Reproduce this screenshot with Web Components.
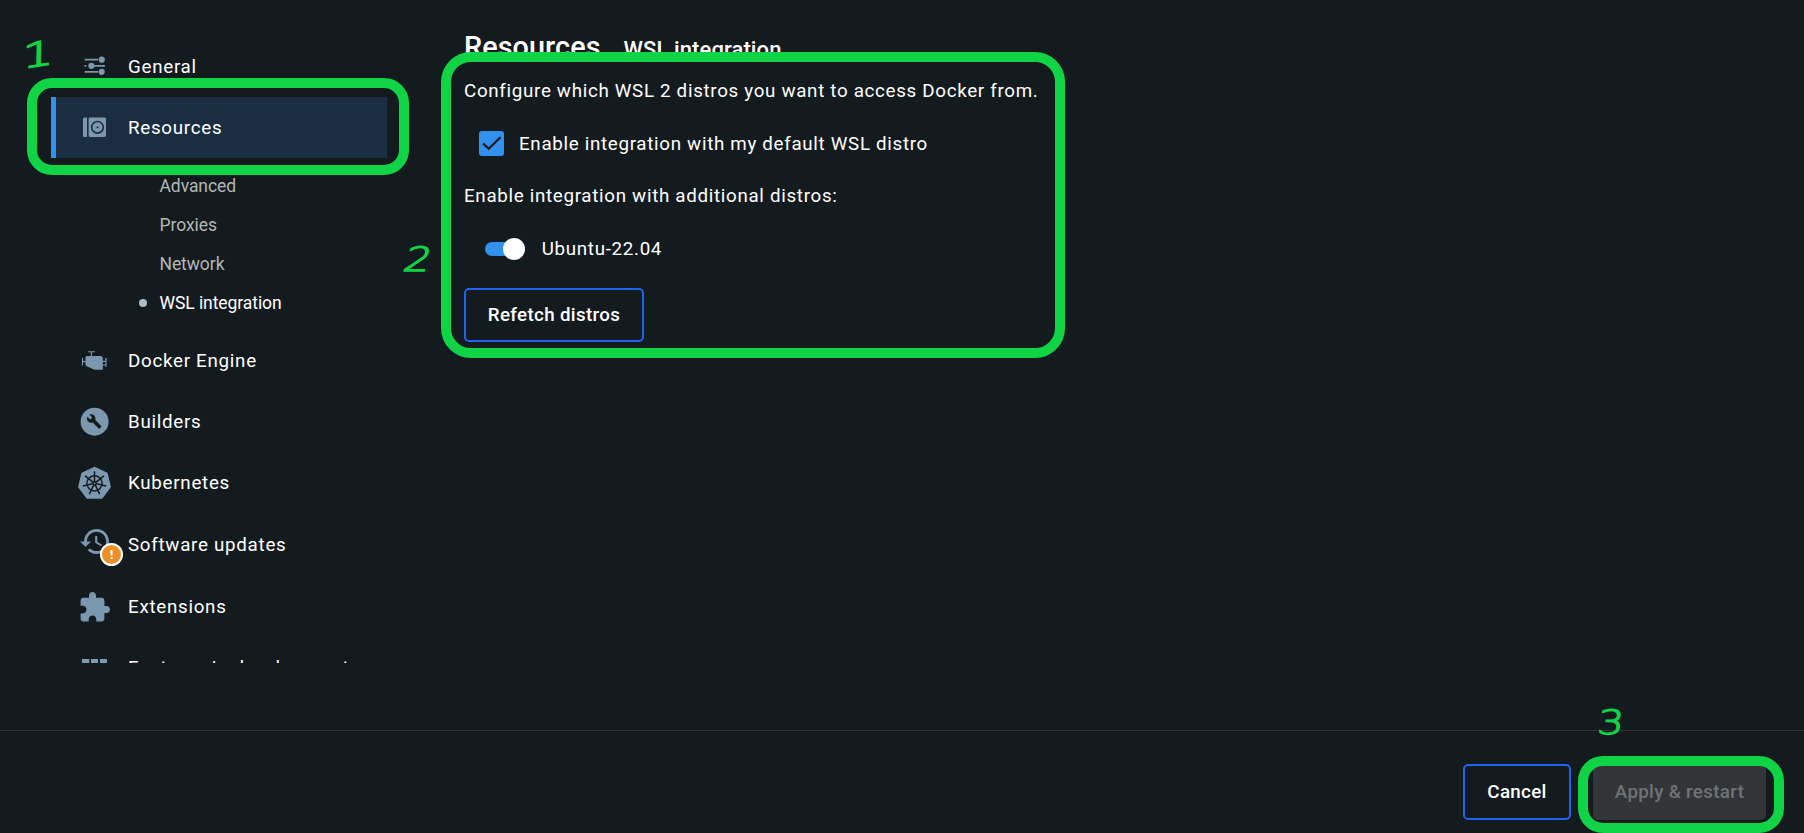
<!DOCTYPE html>
<html lang="en">
<head>
<meta charset="utf-8">
<title>Settings</title>
<style>
html, body { margin: 0; height: 100%; background: #141b1f; }
body { font-family: Roboto, "Liberation Sans", sans-serif; color: #fff; overflow: hidden; }
</style>
</head>
<body>
<settings-window>
  <nav-list slot="nav">
    <nav-item>
      <svg slot="icon" viewBox="75 47 40 40"><path d="M84.7 59.7H98M84.5 65.8H86.3M94 65.8H105M84.7 71.8H98" stroke="currentColor" stroke-width="1.8"/><circle cx="101.7" cy="59.7" r="3.1"/><circle cx="91.4" cy="65.8" r="3.1"/><circle cx="101.7" cy="71.8" r="3.1"/></svg>
      General
    </nav-item>
    <nav-item selected>
      <svg slot="icon" viewBox="75 108 40 40"><path d="M84.5 117.5H87V137H84.5Q83 137 83 135.5V119Q83 117.5 84.5 117.5Z"/><rect x="88.6" y="117.5" width="17.4" height="19.5" rx="1.4"/><circle cx="97.5" cy="127.3" r="5.8" fill="none" stroke="#1b2d40" stroke-width="1.6"/><circle cx="97.5" cy="127.3" r="1" fill="#1b2d40"/></svg>
      Resources
    </nav-item>
    <sub-list>
      <sub-item>Advanced</sub-item>
      <sub-item>Proxies</sub-item>
      <sub-item>Network</sub-item>
      <sub-item selected>WSL integration</sub-item>
    </sub-list>
    <nav-item>
      <svg slot="icon" viewBox="75 341 40 40"><path d="M86.5 356H101.3L102.8 357.5V369.8H94.5L86.7 366.3L85.5 365V357Z"/><path d="M82.5 358V365.6M82.5 361.6H86M88 351.8H95M91.4 352V357M106 359V366.8M105 358.9H107M102 361.4H106M102 365H106" stroke="currentColor" stroke-width="1.1"/></svg>
      Docker Engine
    </nav-item>
    <nav-item>
      <svg slot="icon" viewBox="75 402 40 40"><circle cx="94.6" cy="421.7" r="14"/><path fill="#141b1f" transform="translate(86.3 413.6) scale(.655)" d="M22.7 19l-9.1-9.1c.9-2.3.4-5-1.5-6.9-2-2-5-2.4-7.4-1.3L9 6 6 9 1.6 4.7C.4 7.1.9 10.1 2.9 12.1c1.9 1.9 4.6 2.4 6.9 1.5l9.1 9.1c.4.4 1 .4 1.4 0l2.3-2.3c.5-.4.5-1.1.1-1.4z"/></svg>
      Builders
    </nav-item>
    <nav-item>
      <svg slot="icon" viewBox="-19.5 -20.3 40 40"><path d="M0-15L11.8-9.4L14.8 3.6L6.9 14H-6.9L-14.8 3.6L-11.8-9.4Z" stroke="currentColor" stroke-width="3" stroke-linejoin="round"/><g fill="none" stroke="#141b1f" stroke-width="1.5"><circle r="7.6"/><path d="M0 0V-12M0 0L9.4-7.5M0 0L11.7 2.7M0 0L5.2 10.8M0 0L-5.2 10.8M0 0L-11.7 2.7M0 0L-9.4-7.5"/></g><circle r="2.3" fill="#141b1f"/><circle r=".9"/></svg>
      Kubernetes
    </nav-item>
    <nav-item style="--row:63px">
      <svg slot="icon" viewBox="75 525 40 40"><path transform="translate(78.6 524.9) scale(1.38)" d="M13 3c-4.970 0-9 4.030-9 9H1l3.890 3.890.07.14L9 12H6c0-3.870 3.130-7 7-7s7 3.130 7 7-3.130 7-7 7c-1.930 0-3.680-.79-4.940-2.060l-1.420 1.420C8.270 19.990 10.510 21 13 21c4.970 0 9-4.030 9-9s-4.030-9-9-9zm-1 5v5l4.280 2.540.72-1.210-3.500-2.080V8H12z"/></svg>
      <warn-badge slot="icon"></warn-badge>
      Software updates
    </nav-item>
    <nav-item style="--row:62px">
      <svg slot="icon" viewBox="75 587 40 40"><path transform="translate(77.8 590.7) scale(1.4)" d="M20.5 11H19V7c0-1.100-.9-2-2-2h-4V3.500C13 2.120 11.880 1 10.500 1S8 2.120 8 3.500V5H4c-1.100 0-1.990.9-1.990 2v3.800H3.500c1.490 0 2.700 1.210 2.700 2.700s-1.210 2.700-2.700 2.700H2V20c0 1.100.9 2 2 2h3.800v-1.500c0-1.490 1.210-2.700 2.700-2.700s2.700 1.210 2.700 2.700V22H17c1.100 0 2-.9 2-2v-4h1.500c1.380 0 2.500-1.120 2.500-2.500S21.880 11 20.500 11z"/></svg>
      Extensions
    </nav-item>
    <nav-item style="--row:60px">
      <svg slot="icon" viewBox="75 648 40 40"><path d="M82 659h7.300v7.500H82zM91 659h7v7.500H91zM100 659h7v7.500H100zM82 668.500h7.300v7.500H82zM91 668.500h7v7.500H91zM100 668.500h7v7.500H100z"/></svg>
      Features in development
    </nav-item>
  </nav-list>
  <wsl-panel slot="main"></wsl-panel>
  <action-button slot="actions" style="width:108px;height:56px">Cancel</action-button>
  <action-button slot="actions" disabled style="width:173px;height:56px">Apply &amp; restart</action-button>
  <mark-box slot="marks" style="left:27px;top:78px;width:382px;height:97px;--r:25px"></mark-box>
  <mark-box slot="marks" style="left:441px;top:52px;width:624px;height:306px;--r:30px"></mark-box>
  <mark-box slot="marks" style="left:1578px;top:756px;width:206px;height:77px;--r:25px"></mark-box>
  <mark-number slot="marks" style="left:18px;top:35px;--t:rotate(-9deg) skewX(-10deg) scaleX(1.5)">1</mark-number>
  <mark-number slot="marks" style="left:398px;top:240px;--t:skewX(-16deg) scaleX(1.25)">2</mark-number>
  <mark-number slot="marks" style="left:1591px;top:703px;--t:skewX(-6deg) scaleX(1.22)">3</mark-number>
</settings-window>
<script>
const define = (name, html) => customElements.define(name, class extends HTMLElement {
  constructor() {
    super();
    const t = document.createElement('template');
    t.innerHTML = html;
    this.attachShadow({ mode: 'open' }).append(t.content.cloneNode(true));
  }
});

define('nav-list', `<style>
  :host { display: block; width: 336px; height: 627px; margin: 36px 0 0 51px; overflow: hidden; }
</style><slot></slot>`);

define('nav-item', `<style>
  :host { display: flex; align-items: center; box-sizing: border-box; height: var(--row, 61px); padding-left: 19px;
    border-left: 5px solid transparent; font-size: 18.75px; letter-spacing: .72px; line-height: 28px; white-space: nowrap; }
  :host([selected]) { background: #1b2d40; border-left-color: #3391ee; }
  .icon { position: relative; flex: none; width: 40px; height: 40px; margin-right: 13px; color: #7b98af; }
  ::slotted(svg) { display: block; width: 40px; height: 40px; fill: currentColor; }
</style><span class="icon"><slot name="icon"></slot></span><span><slot></slot></span>`);

define('warn-badge', `<style>
  :host { position: absolute; left: 25px; top: 18.5px; box-sizing: border-box; width: 23px; height: 23px; border-radius: 50%;
    border: 2px solid #fff; background: #ee8e26; color: #fff; }
  svg { display: block; width: 19px; height: 19px; }
</style><svg viewBox="0 0 19 19"><path d="M8.500 5h2v5.500h-2zM8.500 12h2v2h-2z" fill="#fff"/></svg>`);

define('sub-list', `<style>
  :host { display: flex; flex-direction: column; padding: 8px 0 8px 87px; }
</style><slot></slot>`);

define('sub-item', `<style>
  :host { display: flex; align-items: center; gap: 13px; height: 39px; font-size: 17.500px; letter-spacing: -.07px; color: #b3b6b7; }
  i { width: 8px; height: 8px; margin-left: .5px; border-radius: 50%; }
  :host([selected]) { color: #fff; }
  :host([selected]) i { background: #abbcc9; }
</style><i></i><slot></slot>`);

define('action-button', `<style>
  :host { display: flex; align-items: center; justify-content: center; box-sizing: border-box; border: 2px solid #1d63ed;
    border-radius: 5px; font-size: 18.75px; font-weight: 500; letter-spacing: .33px; padding-bottom: 1px; white-space: nowrap; }
  :host([disabled]) { border-color: #323639; background: #323639; color: #6f7375; }
</style><slot></slot>`);

define('check-option', `<style>
  :host { display: flex; align-items: center; gap: 15px; height: 28px; padding-left: 15px; }
  svg { width: 25px; height: 25px; }
</style><svg viewBox="0 0 25 25"><rect width="25" height="25" rx="3" fill="#3391ee"/><path d="M4 12.500L9.700 17.700L21.500 6.200" fill="none" stroke="#141b1f" stroke-width="2.300"/></svg><slot></slot>`);

define('switch-option', `<style>
  :host { display: flex; align-items: center; gap: 16.7px; height: 28px; padding-left: 21px; }
  b { display: flex; align-items: center; justify-content: flex-end; width: 40px; height: 14px; border-radius: 7px; background: #3391ee; }
  i { width: 22px; height: 22px; flex: none; border-radius: 50%; background: #fff; }
</style><b><i></i></b><slot></slot>`);

define('wsl-panel', `<style>
  :host { display: block; padding: 32px 0 0 77px; font-size: 18.75px; letter-spacing: .69px; line-height: 28px; }
  header { display: flex; align-items: baseline; gap: 23px; height: 30px; line-height: 30px; letter-spacing: .1px; }
  h1 { margin: 0; font-size: 28.75px; font-weight: 500; line-height: 30px; }
  h2 { margin: 0; font-size: 22px; font-weight: 500; line-height: 30px; }
  p { margin: 15px 0 24.500px; }
  p + check-option + p { margin: 24.500px 0; }
  action-button { width: 180px; height: 54px; margin-top: 25.500px; }
</style>
<header><h1>Resources</h1><h2>WSL integration</h2></header>
<p>Configure which WSL 2 distros you want to access Docker from.</p>
<check-option>Enable integration with my default WSL distro</check-option>
<p>Enable integration with additional distros:</p>
<switch-option>Ubuntu-22.04</switch-option>
<action-button>Refetch distros</action-button>`);

define('mark-box', `<style>
  :host { position: absolute; box-sizing: border-box; border: 10px solid #10d445; border-radius: var(--r); }
</style>`);

define('mark-number', `<style>
  :host { position: absolute; width: 40px; height: 40px; color: #10d445; font: 200 33.5px/40px "DejaVu Sans", sans-serif; text-align: center; transform: var(--t); -webkit-text-stroke: 1.4px #10d445; }
</style><slot></slot>`);

define('settings-window', `<style>
  :host { position: relative; display: grid; grid-template: 730px 103px / 387px 1fr; height: 833px; overflow: hidden; background: #141b1f; }
  footer { grid-column: 1 / 3; display: flex; justify-content: flex-end; align-items: flex-start; gap: 22px; box-sizing: border-box;
    border-top: 1px solid #2d3336; padding: 33px 38px 0 0; }
</style>
<slot name="nav"></slot><slot name="main"></slot>
<footer><slot name="actions"></slot></footer>
<slot name="marks"></slot>`);
</script>
</body>
</html>
